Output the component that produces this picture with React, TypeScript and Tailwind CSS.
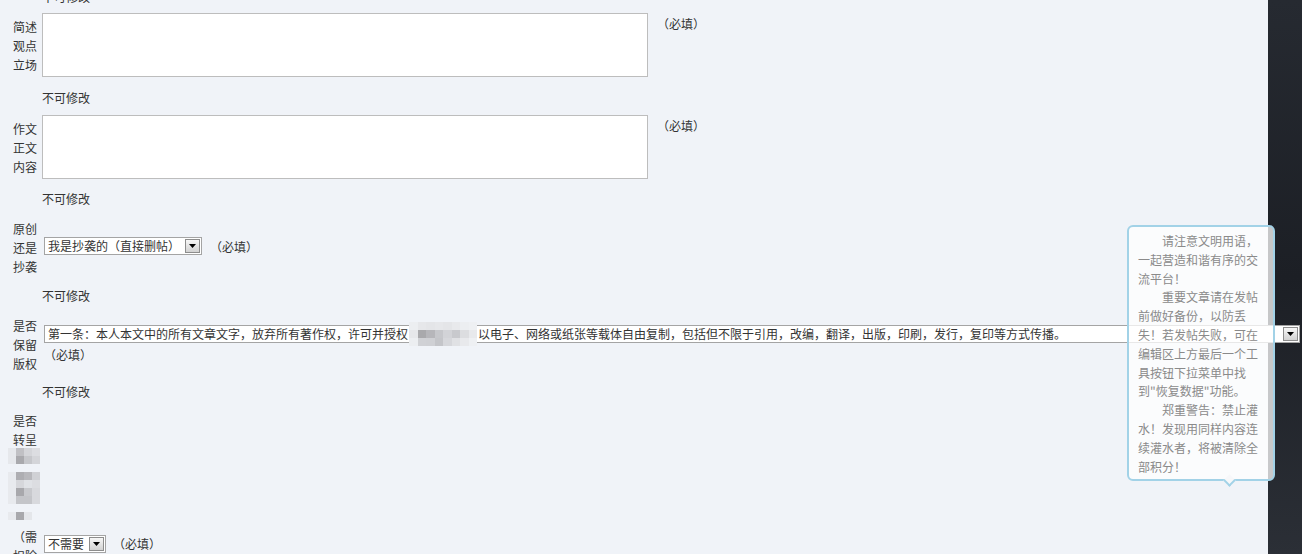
import React from "react";

const Arrow = () => (
  <div className="m-[1px] ml-auto flex w-[15px] shrink-0 items-center justify-center border border-[#8d8d8d] bg-linear-to-b from-[#f7f7f7] to-[#d2d2d2]">
    <svg width="7" height="4" viewBox="0 0 7 4">
      <path d="M0 0h7L3.5 4z" fill="#000" />
    </svg>
  </div>
);

type Cell = string[];

const Mosaic = ({ rows, className, cell }: { rows: Cell[]; className?: string; cell?: string }) => (
  <div className={"flex flex-col " + (className ?? "")}>
    {rows.map((r, i) => (
      <div key={i} className="flex">
        {r.map((c, j) => (
          <div key={j} className={cell ?? "h-[8px] w-[8px]"} style={{ backgroundColor: c }} />
        ))}
      </div>
    ))}
  </div>
);

const Label = ({ lines }: { lines: string[] }) => (
  <div className="flex w-[42px] shrink-0 flex-col items-end pr-[5px]">
    {lines.map((l, i) => (
      <div key={i} className="h-[19px] whitespace-nowrap leading-[19px]">
        {l}
      </div>
    ))}
  </div>
);

const Note = ({ className }: { className: string }) => (
  <div className={"h-[19px] pl-[42px] leading-[19px] " + className}>不可修改</div>
);

const Required = ({ className }: { className?: string }) => (
  <span className={"whitespace-nowrap leading-[19px] " + (className ?? "")}>（必填）</span>
);

const blurSelect: Cell[] = [
  ["#eceef1", "#e6e7ea", "#e4e5e8", "#e6e7ea", "#e4e5e8", "#e8e9ec", "#eceef1", "#eef0f3"],
  ["#e6e7ea", "#a9a9ac", "#b6b6ba", "#c6c7cb", "#d2d3d7", "#c8c9cd", "#dcdde0", "#e8e9ec"],
  ["#eceef1", "#d0d1d5", "#cfd0d4", "#c4c5c9", "#d6d7db", "#e0e1e4", "#e8e9ec", "#eef0f3"],
];

const tipLines: { t: string; indent?: boolean }[] = [
  { t: "请注意文明用语，", indent: true },
  { t: "一起营造和谐有序的交" },
  { t: "流平台！" },
  { t: "重要文章请在发帖", indent: true },
  { t: "前做好备份，以防丢" },
  { t: "失！若发帖失败，可在" },
  { t: "编辑区上方最后一个工" },
  { t: "具按钮下拉菜单中找" },
  { t: "到\"恢复数据\"功能。" },
  { t: "郑重警告：禁止灌", indent: true },
  { t: "水！发现用同样内容连" },
  { t: "续灌水者，将被清除全" },
  { t: "部积分！" },
];

export default function App() {
  return (
    <div className="relative flex h-[554px] w-[1302px] overflow-hidden font-['Noto_Sans_CJK_SC','Noto_Sans',sans-serif] text-[12px] text-[#333]">
      <div className="flex w-[1268px] shrink-0 flex-col bg-[#f0f3f8]">
        <Note className="mt-[-13px]" />

        <div className="mt-[7px] flex items-center">
          <Label lines={["简述", "观点", "立场"]} />
          <div className="flex items-start">
            <textarea
              readOnly
              className="h-[64px] w-[606px] resize-none border border-[#bdbdbd] bg-white outline-none"
            />
            <Required className="ml-[9px] mt-[1px]" />
          </div>
        </div>

        <Note className="mt-[11px]" />

        <div className="mt-[8px] flex items-center">
          <Label lines={["作文", "正文", "内容"]} />
          <div className="flex items-start">
            <textarea
              readOnly
              className="h-[64px] w-[606px] resize-none border border-[#bdbdbd] bg-white outline-none"
            />
            <Required className="ml-[9px] mt-[1px]" />
          </div>
        </div>

        <Note className="mt-[10px]" />

        <div className="mt-[11px] flex items-center">
          <Label lines={["原创", "还是", "抄袭"]} />
          <div className="mb-[3px] flex items-center pl-[2px]">
            <div className="flex h-[18px] w-[158px] items-stretch border border-[#a4a4a4] bg-white">
              <span className="pl-[3px] leading-[16px] whitespace-nowrap">我是抄袭的（直接删帖）</span>
              <Arrow />
            </div>
            <Required className="ml-[8px]" />
          </div>
        </div>

        <Note className="mt-[10px]" />

        <div className="mt-[11px] flex items-center">
          <Label lines={["是否", "保留", "版权"]} />
          <div className="flex flex-col items-start pl-[2px]">
            <div className="relative z-10 flex h-[18px] w-[1256px] items-stretch border border-[#a4a4a4] bg-white">
              <span className="flex items-center pl-[3px] leading-[16px] whitespace-nowrap">
                第一条：本人本文中的所有文章文字，放弃所有著作权，许可并授权
                <Mosaic rows={blurSelect} cell="h-[8px] w-[8.5px]" className="mx-[1px] -my-[4px]" />
                以电子、网络或纸张等载体自由复制，包括但不限于引用，改编，翻译，出版，印刷，发行，复印等方式传播。
              </span>
              <Arrow />
            </div>
            <Required className="mt-[2px]" />
          </div>
        </div>

        <Note className="mt-[9px]" />

        <div className="mt-[10px] flex items-start">
          <div className="flex w-[42px] shrink-0 flex-col items-end">
            <div className="h-[19px] pr-[5px] leading-[19px]">是否</div>
            <div className="h-[19px] pr-[5px] leading-[19px]">转呈</div>
            <div className="flex h-[76px] flex-col pr-[2px]">
              <Mosaic
                className="-mt-[1px]"
                rows={[
                  ["#e6e8ec", "#c0c0c4", "#d4d5d9", "#dcdde1"],
                  ["#e6e8ec", "#a9a9ad", "#c6c7cb", "#d4d5d9"],
                ]}
              />
              <Mosaic
                className="mt-[8px]"
                rows={[
                  ["#e8eaee", "#aeaeb2", "#b8b8bc", "#d0d1d5"],
                  ["#e8eaee", "#d6d7db", "#e0e2e6", "#dcdde1"],
                  ["#e8eaee", "#a8a8ac", "#c8c9cd", "#d8d9dd"],
                  ["#e8eaee", "#c4c5c9", "#c4c5c9", "#d8d9dd"],
                ]}
              />
              <Mosaic className="mt-[8px]" rows={[["#e8eaee", "#a8a8ac", "#e4e6ea", "#f0f3f8"]]} />
            </div>
            <div className="mt-[2px] h-[19px] pr-[5px] leading-[19px] whitespace-nowrap">（需</div>
            <div className="h-[19px] pr-[5px] leading-[19px]">扣除</div>
          </div>
          <div className="flex items-center pl-[2px] pt-[123px]">
            <div className="flex h-[18px] w-[62px] items-stretch border border-[#a4a4a4] bg-white">
              <span className="pl-[3px] leading-[16px] whitespace-nowrap">不需要</span>
              <Arrow />
            </div>
            <Required className="ml-[7px]" />
          </div>
        </div>
      </div>

      <div className="flex-1 bg-linear-to-b from-[#262a31] via-[#1c1f25] to-[#2b2f36]" />

      <div className="absolute left-[1127px] top-[225px] z-20 h-[256px] w-[148px] rounded-[6px] border-2 border-[#a2d2e7] bg-white/75 pl-[9px] pt-[5px] text-[#8a8a8a]">
        {tipLines.map((l, i) => (
          <div
            key={i}
            className={"h-[18.8px] whitespace-nowrap leading-[18.8px] " + (l.indent ? "pl-[24px]" : "")}
          >
            {l.t}
          </div>
        ))}
        <div className="absolute bottom-[-6px] left-[96px] h-[9px] w-[9px] rotate-45 border-b-2 border-r-2 border-[#a2d2e7] bg-[#f7f8fa]" />
      </div>
    </div>
  );
}
